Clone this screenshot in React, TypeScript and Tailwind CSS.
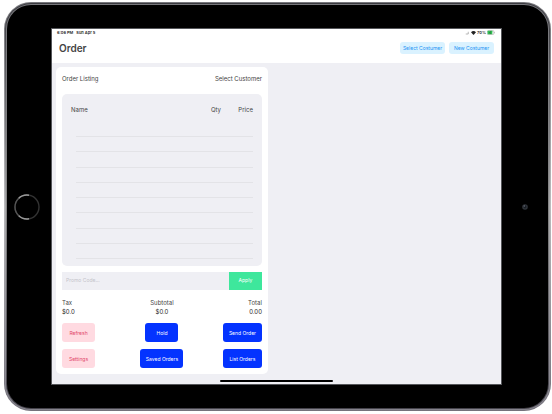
import React from 'react';

const rows = [1, 2, 3, 4, 5, 6, 7, 8, 9];

const StatusBar = () => (
  <div className="flex items-start justify-between pl-[5px] pr-[6px] h-[8px] text-[4px] leading-[7px] font-semibold text-[#222]">
    <div className="flex gap-[3px]">
      <span>6:06 PM</span>
      <span>Sun Apr 5</span>
    </div>
    <div className="flex items-center gap-px">
      <svg className="w-[4px] h-[4px] mr-px" viewBox="0 0 8 8" aria-hidden="true">
        <path d="M6.5 1.5v4.5h-5" fill="none" stroke="#888" strokeWidth="1.2" />
      </svg>
      <svg className="w-[5px] h-[4px]" viewBox="0 0 10 8" aria-hidden="true">
        <path d="M0 2.5C3-.6 7-.6 10 2.5L5 8z" fill="#222" />
      </svg>
      <span>70%</span>
      <svg className="w-[8px] h-[5px]" viewBox="0 0 16 10" aria-hidden="true">
        <rect x=".6" y="1.1" width="13" height="8" rx="2" fill="#fff" stroke="#999" strokeWidth="1" />
        <rect x="1.2" y="1.7" width="9.5" height="6.8" rx="1" fill="#31bd52" />
        <path d="M15 4v2.5" stroke="#999" />
        <path d="M7.5 2.5L5 5.5h2l-.6 2.4" fill="none" stroke="#222" strokeWidth=".7" />
      </svg>
    </div>
  </div>
);

const Header = () => (
  <header className="bg-white">
    <StatusBar />
    <div className="flex items-center justify-between h-[26px] px-[7px] pb-[5px]">
      <h1 className="text-[10px] leading-[14px] font-semibold text-[#444]">Order</h1>
      <div className="flex gap-[4px] text-[5px] leading-[6px] text-[#2493f4]">
        <button className="w-[45px] h-[12px] rounded-[3px] bg-[#daf2ff] whitespace-nowrap">Select Costumer</button>
        <button className="w-[45px] h-[12px] rounded-[3px] bg-[#daf2ff] whitespace-nowrap">New Costumer</button>
      </div>
    </div>
  </header>
);

const OrderTable = () => (
  <div className="mt-[10px] rounded-[5px] bg-[#efeff4] px-[9px] pt-[12px] pb-[7px]">
    <table className="w-full table-fixed border-collapse text-[6px] leading-[8px] text-[#444]">
      <thead>
        <tr className="h-[16px] align-top">
          <th className="p-0 text-left font-normal">Name</th>
          <th className="w-[24px] p-0 text-right font-normal">Qty</th>
          <th className="w-[32px] p-0 text-right font-normal">Price</th>
        </tr>
      </thead>
      <tbody>
        {rows.map((row) => (
          <tr key={row} className="h-[15px] nth-[4n+3]:h-[16px]">
            <td colSpan={3} className="p-0 align-bottom">
              <div className="ml-[5px] h-px bg-[#e3e3e7]" />
            </td>
          </tr>
        ))}
      </tbody>
    </table>
  </div>
);

const Totals = () => (
  <div className="mt-[8px] grid grid-cols-3 text-[6px] leading-[9px] text-[#444]">
    <div>
      <p>Tax</p>
      <p className="text-[#222]">$0.0</p>
    </div>
    <div className="text-center">
      <p>Subtotal</p>
      <p className="text-[#222]">$0.0</p>
    </div>
    <div className="text-right">
      <p>Total</p>
      <p className="text-[#222]">0.00</p>
    </div>
  </div>
);

const pink = 'h-[19px] w-[33px] rounded-[3px] bg-[#ffdae1] text-[#e2476a]';
const blue = 'h-[19px] rounded-[3px] bg-[#0433ff] text-white whitespace-nowrap';

const Actions = () => (
  <div className="mt-[7px] grid grid-cols-3 gap-y-[7px] text-[5px] leading-[6px]">
    <button className={`${pink} justify-self-start`}>Refresh</button>
    <button className={`${blue} w-[33px] justify-self-center`}>Hold</button>
    <button className={`${blue} w-[39px] justify-self-end`}>Send Order</button>
    <button className={`${pink} justify-self-start`}>Settings</button>
    <button className={`${blue} w-[43px] justify-self-center`}>Saved Orders</button>
    <button className={`${blue} w-[39px] justify-self-end`}>List Orders</button>
  </div>
);

const OrderCard = () => (
  <section className="ml-[4px] w-[47.2%] rounded-[5px] bg-white px-[6px] pt-[7px] pb-[6px]">
    <div className="flex justify-between text-[6px] leading-[10px] text-[#444]">
      <h2>Order Listing</h2>
      <span>Select Customer</span>
    </div>
    <OrderTable />
    <form className="mt-[6px] flex h-[18px] text-[5px]" onSubmit={(e) => e.preventDefault()}>
      <input
        aria-label="Promo Code"
        placeholder="Promo Code..."
        className="min-w-0 flex-1 bg-[#efeff4] px-[4px] placeholder:text-[#c4c4ca] outline-none"
      />
      <button className="w-[33px] bg-[#3ee79c] text-white">Apply</button>
    </form>
    <Totals />
    <Actions />
  </section>
);

export default function App() {
  return (
    <div className="min-h-screen bg-white pl-[4px] pr-px pt-[2px] pb-[3px] font-['Inter',sans-serif]">
      <div className="rounded-[27px] bg-linear-to-b from-[#77777c] via-[#bcbcbe] to-[#74727b] p-px">
        <div className="rounded-[26px] bg-linear-to-b from-[#3b3b40] via-[#aaaaac] to-[#85838c] p-px">
          <div className="rounded-[25px] bg-linear-to-b from-[#77777c] via-[#888] to-[#44424a] p-px">
            <div className="flex rounded-[24px] bg-black py-[23px]">
              <div className="flex w-[44px] shrink-0 items-center justify-center pr-[4px]">
                <button aria-label="Home" className="h-[26px] w-[26px] rounded-full">
                  <svg className="h-full w-full" viewBox="0 0 26 26" aria-hidden="true">
                    <circle cx="13" cy="13" r="12" fill="#000" stroke="#333" strokeWidth="1.4" />
                    <path d="M4.5 4.5A12 12 0 0 1 15 1.2M4.5 21.5A12 12 0 0 0 15 24.8" fill="none" stroke="#999" strokeWidth="1.4" />
                    <path d="M4.5 4.5a12 12 0 0 0 0 17" fill="none" stroke="#555" strokeWidth="1.2" />
                  </svg>
                </button>
              </div>
              <main className="min-w-0 flex-1 border border-[#55565a] bg-[#efeff4]">
                <Header />
                <div className="pt-[4px]">
                  <OrderCard />
                </div>
                <div className="mx-auto mt-[6px] mb-[2px] h-[2px] w-1/4 rounded-full bg-black" />
              </main>
              <div className="flex w-[46px] shrink-0 items-center justify-center">
                <svg className="h-[6px] w-[6px]" viewBox="0 0 6 6" aria-hidden="true">
                  <circle cx="3" cy="3" r="2.8" fill="#30343a" />
                  <circle cx="3" cy="3" r="1.4" fill="#191e25" />
                  <circle cx="2.3" cy="2" r=".7" fill="#6c727b" />
                </svg>
              </div>
            </div>
          </div>
        </div>
      </div>
    </div>
  );
}
